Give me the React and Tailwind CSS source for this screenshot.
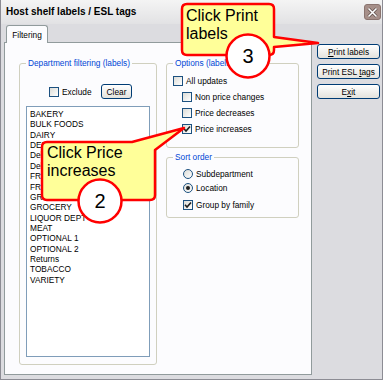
import React from 'react';

const departments = [
  'BAKERY',
  'BULK FOODS',
  'DAIRY',
  'DELI',
  'Deli Counter',
  'Deli Meats',
  'FROZEN FOODS',
  'FRUIT',
  'GREETING CARDS',
  'GROCERY',
  'LIQUOR DEPT',
  'MEAT',
  'OPTIONAL 1',
  'OPTIONAL 2',
  'Returns',
  'TOBACCO',
  'VARIETY',
];

const CheckBox = ({ checked }) => (
  <span className="w-[10px] h-[10px] shrink-0 border border-[#1c5180] bg-linear-to-br from-[#dcdcd7] to-white flex items-center justify-center">
    {checked && (
      <svg width="8" height="8" viewBox="0 0 8 8">
        <path d="M1 3.8 L3 6 L7 1.5" fill="none" stroke="#1e1e1e" strokeWidth="1.6" />
      </svg>
    )}
  </span>
);

const Radio = ({ selected }) => (
  <span className="w-[10px] h-[10px] shrink-0 rounded-full border border-[#1c5180] bg-linear-to-br from-[#dcdcd7] to-white flex items-center justify-center">
    {selected && <span className="w-[4px] h-[4px] rounded-full bg-[#1e1e1e]" />}
  </span>
);

const Option = ({ label, checked, className = '' }) => (
  <div className={`flex items-center h-[10px] gap-[3px] ${className}`}>
    <CheckBox checked={checked} />
    <span>{label}</span>
  </div>
);

const Button = ({ children, className = '' }) => (
  <div
    className={`h-[15px] border border-[#003c74] rounded-[3px] bg-linear-to-b from-white to-[#e4e3dd] flex items-center justify-center ${className}`}
  >
    <span>{children}</span>
  </div>
);

const App = () => {
  return (
    <div className="w-[385px] h-[381px] bg-white relative overflow-hidden font-['Liberation_Sans',Arial,sans-serif] text-[8.3px] leading-[10px] text-black">
      <div className="w-[383px] h-[380px] bg-[#dcdce0] border-l border-r border-b border-[#8c8c94] flex flex-col">
        {/* title bar */}
        <div className="h-[24px] flex items-center pl-[5px] pr-[1px] bg-linear-to-b from-[#f4f4f4] to-[#e2e2e4]">
          <span className="flex-1 font-bold text-[10px]">Host shelf labels / ESL tags</span>
          <div className="w-[17px] h-[16px] rounded-[3px] bg-[#a68f89] border border-[#8a746f] flex items-center justify-center">
            <svg width="11" height="11" viewBox="0 0 11 11">
              <path d="M1.5 1.5 L9.5 9.5 M9.5 1.5 L1.5 9.5" stroke="#5a4a46" strokeWidth="3" />
              <path d="M1.5 1.5 L9.5 9.5 M9.5 1.5 L1.5 9.5" stroke="#ffffff" strokeWidth="1.6" />
            </svg>
          </div>
        </div>

        <div className="flex pt-[1px] pl-[3px]">
          <div className="w-[308px] flex flex-col">
            <div className="h-[17px] flex items-end pl-[2px]">
              <div className="relative z-10 w-[42px] h-[18px] -mb-px border border-b-0 border-[#919b9c] rounded-t-[3px] bg-[#fcfcfe] flex items-center justify-center">
                Filtering
              </div>
            </div>

            <div className="h-[333px] border border-[#919b9c] bg-[#fcfcfe] flex pl-[14px] pt-[15px]">
              {/* department filtering */}
              <fieldset className="w-[138px] h-[307px] border border-[#d0d0bf] rounded-[3px] px-[6px]">
                <legend className="pl-[2px] pr-[2px] text-[#0046d5]">Department filtering (labels)</legend>
                <div className="mt-[16px] h-[15px] flex items-center pl-[23px]">
                  <div className="w-[52px] flex items-center gap-[3px]">
                    <CheckBox />
                    <span>Exclude</span>
                  </div>
                  <Button className="w-[31px]">Clear</Button>
                </div>
                <div className="mt-[7px] h-[251px] w-[124px] border border-[#7f9db9] bg-white pt-[2px] pl-[3px] leading-[10.36px]">
                  {departments.map((d) => (
                    <div key={d}>{d}</div>
                  ))}
                </div>
              </fieldset>

              <div className="ml-[9px] w-[133px] flex flex-col">
                <fieldset className="h-[90px] border border-[#d0d0bf] rounded-[3px] pl-[6px]">
                  <legend className="pl-[2px] pr-[2px] text-[#0046d5]">Options (labels)</legend>
                  <Option label="All updates" className="mt-[8px]" />
                  <Option label="Non price changes" className="mt-[6px] ml-[9px]" />
                  <Option label="Price decreases" className="mt-[6px] ml-[9px]" />
                  <Option label="Price increases" checked className="mt-[6px] ml-[9px]" />
                </fieldset>

                <fieldset className="mt-[4px] h-[66px] border border-[#d0d0bf] rounded-[3px] pl-[6px]">
                  <legend className="pl-[2px] pr-[2px] text-[#0046d5]">Sort order</legend>
                  <div className="mt-[7px] ml-[10px] flex items-center h-[10px] gap-[3px]">
                    <Radio />
                    <span>Subdepartment</span>
                  </div>
                  <div className="mt-[4px] ml-[10px] flex items-center h-[10px] gap-[3px]">
                    <Radio selected />
                    <span>Location</span>
                  </div>
                  <Option label="Group by family" checked className="mt-[7px] ml-[10px]" />
                </fieldset>
              </div>
            </div>
          </div>

          <div className="ml-[5px] pt-[19px] flex flex-col gap-[5px] w-[63px]">
            <Button>
              <span className="underline">P</span>rint labels
            </Button>
            <Button>
              Print ESL <span className="underline">t</span>ags
            </Button>
            <Button>
              E<span className="underline">x</span>it
            </Button>
          </div>
        </div>
      </div>

      {/* callouts */}
      <svg className="absolute inset-0 pointer-events-none" width="385" height="381" viewBox="0 0 385 381">
        <path
          d="M187 4 H269 Q274 4 274 9 V37 L318 43 L274 47 V50 Q274 55 269 55 H187 Q182 55 182 50 V9 Q182 4 187 4 Z"
          fill="#ffff99"
          stroke="#ff0000"
          strokeWidth="2.5"
          strokeLinejoin="round"
        />
        <circle cx="248" cy="56" r="21.5" fill="#ffffff" stroke="#ff0000" strokeWidth="2.5" />
        <path
          d="M47 142 H132 L184 128 L155 150 V195 Q155 200 150 200 H47 Q42 200 42 195 V147 Q42 142 47 142 Z"
          fill="#ffff99"
          stroke="#ff0000"
          strokeWidth="2.5"
          strokeLinejoin="round"
        />
        <circle cx="100" cy="201" r="21.5" fill="#ffffff" stroke="#ff0000" strokeWidth="2.5" />
      </svg>
      <div className="absolute left-[186px] top-[7px] text-[16px] leading-[18px] pointer-events-none">
        Click Print
        <br />
        labels
      </div>
      <div className="absolute left-[47px] top-[144px] text-[16px] leading-[18px] pointer-events-none">
        Click Price
        <br />
        increases
      </div>
      <div className="absolute left-[226px] top-[34px] w-[44px] h-[44px] flex items-center justify-center text-[20px] leading-none pointer-events-none">
        3
      </div>
      <div className="absolute left-[78px] top-[179px] w-[44px] h-[44px] flex items-center justify-center text-[20px] leading-none pointer-events-none">
        2
      </div>
    </div>
  );
};

export default App;
